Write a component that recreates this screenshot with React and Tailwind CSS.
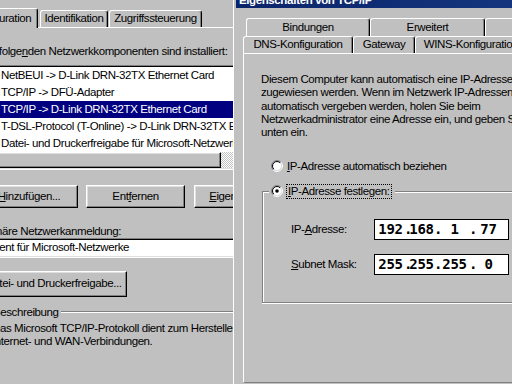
const raised =
  'border border-t-white border-l-white border-r-black border-b-black shadow-[inset_-1px_-1px_#808080,inset_1px_1px_#dfdfdf]'

const ITEMS = [
  'NetBEUI -> D-Link DRN-32TX Ethernet Card',
  'TCP/IP -> DFÜ-Adapter',
  'TCP/IP -> D-Link DRN-32TX Ethernet Card',
  'T-DSL-Protocol (T-Online) -> D-Link DRN-32TX Ethernet Card',
  'Datei- und Druckerfreigabe für Microsoft-Netzwerke',
]

function Btn({ className, children }) {
  return (
    <div className={`${raised} shrink-0 flex items-center justify-center bg-[#c0c0c0] whitespace-nowrap ${className}`}>
      {children}
    </div>
  )
}

function Tab({ className, children }) {
  return (
    <div className={`shrink-0 flex items-center justify-center whitespace-nowrap bg-[#c0c0c0] border-t border-l border-r border-t-white border-l-white border-r-black rounded-t-[3px] shadow-[inset_-1px_0_#808080] ${className}`}>
      {children}
    </div>
  )
}

function Radio({ checked }) {
  return (
    <svg width="12" height="12" viewBox="0 0 12 12" className="shrink-0">
      <defs>
        <linearGradient id="radio-out" x1="0" y1="0" x2="1" y2="1">
          <stop offset="0.5" stopColor="#808080" />
          <stop offset="0.5" stopColor="#ffffff" />
        </linearGradient>
        <linearGradient id="radio-in" x1="0" y1="0" x2="1" y2="1">
          <stop offset="0.5" stopColor="#000000" />
          <stop offset="0.5" stopColor="#dfdfdf" />
        </linearGradient>
      </defs>
      <circle cx="6" cy="6" r="5.5" fill="none" stroke="url(#radio-out)" />
      <circle cx="6" cy="6" r="4.5" fill="#ffffff" stroke="url(#radio-in)" />
      {checked && <circle cx="6" cy="6" r="1.8" fill="#000000" />}
    </svg>
  )
}

function IpField({ parts }) {
  const widths = ['w-[27px]', 'w-[25px]', 'w-[29px]', 'w-[29px]']
  const dots = ['w-[5px]', 'w-[6px]', 'w-[5px]']
  return (
    <div className="w-[135px] h-[21px] shrink-0 border border-black bg-white flex items-center pl-[2px] font-['DejaVu_Sans_Mono',monospace] font-bold text-[14px] tracking-[-0.3px]">
      {parts.map((p, i) => (
        <div key={i} className="flex">
          <span className={`${widths[i]} text-center`}>{p}</span>
          {i < 3 && <span className={`${dots[i]} text-center`}>.</span>}
        </div>
      ))}
    </div>
  )
}

function LeftDialog() {
  return (
    <div className="w-[233px] shrink-0 overflow-hidden flex flex-col">
      <div className="h-[3px] bg-[#a8a8a8]" />
      <div className="mt-[8px] h-[19px] flex items-end -ml-[38px]">
        <Tab className="w-[76px] h-[20px] -mb-px relative z-10">Konfiguration</Tab>
        <Tab className="w-[68px] h-[17px] ml-[2px]">Identifikation</Tab>
        <Tab className="w-[93px] h-[17px] ml-px">Zugriffssteuerung</Tab>
      </div>
      <div className="border-t border-white flex-1 -ml-[20px] w-[270px] flex flex-col">
        <div className="mt-[17px] leading-[13px] whitespace-nowrap">
          Die folge<span className="underline">n</span>den Netzwerkkomponenten sind installiert:
        </div>
        <div className="mt-[7px] border border-t-[#808080] border-l-[#808080] border-r-white border-b-white">
          <div className="border border-t-black border-l-black border-r-[#dfdfdf] border-b-[#dfdfdf] bg-white">
            {ITEMS.map((item, i) => (
              <div key={item} className="h-[17px] flex items-center pl-[17px] whitespace-nowrap">
                <span className={`flex-1 px-[2px] leading-[17px] ${i === 2 ? 'bg-[#000080] text-white' : ''}`}>{item}</span>
              </div>
            ))}
            <div className="h-[16px] flex bg-[#c0c0c0]">
              <div className={`${raised} w-[239px] shrink-0`} />
              <div className="flex-1 bg-[image:repeating-conic-gradient(#c0c0c0_0%_25%,#ffffff_0%_50%)] bg-[length:2px_2px]" />
            </div>
          </div>
        </div>
        <div className="mt-[15px] flex h-[23px]">
          <Btn className="w-[98px]"><span className="underline">H</span>inzufügen...</Btn>
          <Btn className="w-[99px] ml-[8px]">Ent<span className="underline">f</span>ernen</Btn>
          <Btn className="w-[98px] ml-[9px]"><span className="underline">E</span>igenschaften</Btn>
        </div>
        <div className="mt-[17px] leading-[13px] whitespace-nowrap">Primäre Netzwerkanmeldung:</div>
        <div className="h-[20px] border border-t-[#808080] border-l-[#808080] border-r-white border-b-white">
          <div className="h-full border border-t-black border-l-black border-r-[#dfdfdf] border-b-[#dfdfdf] bg-white flex items-center pl-[5px] whitespace-nowrap">
            Client für Microsoft-Netzwerke
          </div>
        </div>
        <Btn className="mt-[13px] h-[26px] w-[147px]">Datei- und Druckerfreigabe...</Btn>
        <div className="mt-[14px] border-t border-l border-[#808080] shadow-[inset_1px_1px_#ffffff] pb-[40px]">
          <div className="-mt-[6px] ml-[10px] w-fit px-[2px] bg-[#c0c0c0] leading-[13px]">Beschreibung</div>
          <div className="mt-[3px] pl-[11px] leading-[13px] whitespace-nowrap">
            Das Microsoft TCP/IP-Protokoll dient zum Herstellen von
            <br />
            Internet- und WAN-Verbindungen.
          </div>
        </div>
      </div>
    </div>
  )
}

function RightDialog() {
  return (
    <div className="flex-1 min-w-0 overflow-hidden border-l border-white pl-[2px] flex flex-col">
      <div className="h-[8px] shrink-0 overflow-hidden bg-[linear-gradient(90deg,#0a246a,#14357e)]">
        <div className="-mt-[6px] pl-[3px] leading-[13px] font-bold text-white whitespace-nowrap">
          Eigenschaften von TCP/IP
        </div>
      </div>
      <div className="pl-[7px] flex flex-col">
        <div className="mt-[10px] h-[18px] flex ml-[3px]">
          <Tab className="w-[124px]">Bindungen</Tab>
          <Tab className="w-[115px]">Erweitert</Tab>
          <Tab className="w-[115px]">NetBIOS</Tab>
        </div>
        <div className="h-[17px] flex">
          <Tab className="w-[110px]">DNS-Konfiguration</Tab>
          <Tab className="w-[62px]">Gateway</Tab>
          <Tab className="w-[112px]">WINS-Konfiguration</Tab>
        </div>
        <div className="h-[330px] w-[300px] shrink-0 border-t border-l border-white border-b border-b-[#808080]">
          <p className="mt-[19px] pl-[17px] leading-[13.33px] whitespace-nowrap">
            Diesem Computer kann automatisch eine IP-Adresse
            <br />
            zugewiesen werden. Wenn im Netzwerk IP-Adressen
            <br />
            automatisch vergeben werden, holen Sie beim
            <br />
            Netzwerkadministrator eine Adresse ein, und geben Sie
            <br />
            unten ein.
          </p>
          <div className="mt-[20px] ml-[27px] h-[13px] flex items-center gap-[4px] whitespace-nowrap">
            <Radio />
            <span><span className="underline">I</span>P-Adresse automatisch beziehen</span>
          </div>
          <div className="mt-[18px] ml-[18px] border-t border-l border-b border-[#808080] shadow-[inset_1px_1px_#ffffff,0_1px_#ffffff] pb-[27px]">
            <div className="-mt-[8px] ml-[6px] h-[15px] w-fit flex items-center gap-[3px] pl-[2px] pr-[3px] bg-[#c0c0c0] whitespace-nowrap">
              <Radio checked />
              <span className="border border-dotted border-black px-[1px] leading-[13px]">
                <span className="underline">I</span>P-Adresse festlegen:
              </span>
            </div>
            <div className="mt-[20px] flex items-center pl-[28px]">
              <span className="w-[83px] shrink-0 whitespace-nowrap">IP-<span className="underline">A</span>dresse:</span>
              <IpField parts={['192', '168', '1', '77']} />
            </div>
            <div className="mt-[14px] flex items-center pl-[28px]">
              <span className="w-[83px] shrink-0 whitespace-nowrap"><span className="underline">S</span>ubnet Mask:</span>
              <IpField parts={['255', '255', '255', '0']} />
            </div>
          </div>
        </div>
      </div>
    </div>
  )
}

export default function App() {
  return (
    <div className="w-[512px] h-[384px] overflow-hidden flex bg-[#c0c0c0] text-black text-[11.5px] tracking-[-0.4px] font-['Liberation_Sans',Arial,sans-serif]">
      <LeftDialog />
      <RightDialog />
    </div>
  )
}
